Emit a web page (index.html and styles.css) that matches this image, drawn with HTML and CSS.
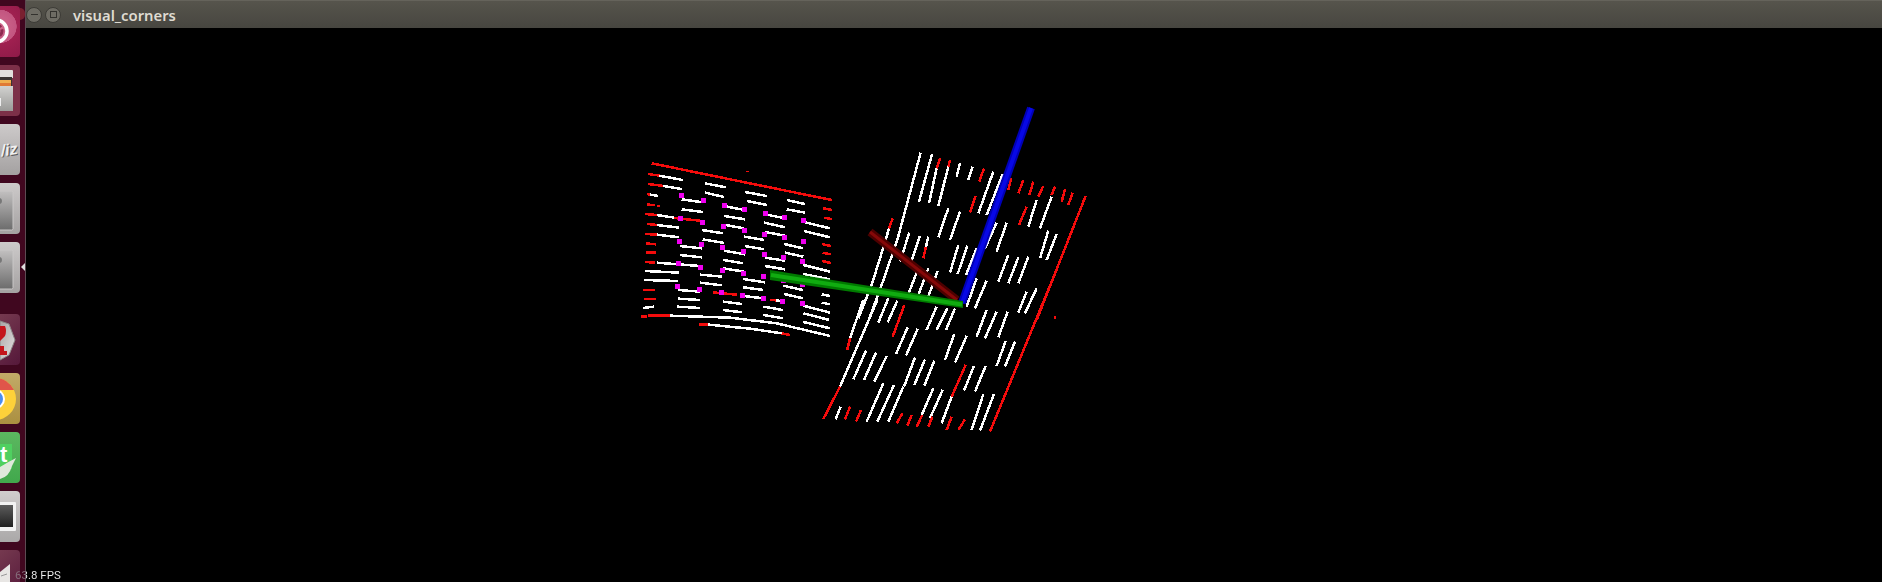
FILE: index.html
```html
<!DOCTYPE html>
<html lang="en">

<head>
    <title>visual_corners</title>
    <meta charset="utf-8">
    <link rel="stylesheet" href="styles.css">
</head>

<body>

    <nav class="launcher">
        <span class="close-peek"></span>

        <div class="tile tile-dash">
            <svg width="20" height="51">
                <circle cx="-4" cy="25" r="11" fill="none" stroke="#fff" stroke-width="3.5" />
                <circle cx="-4" cy="25" r="6" fill="none" stroke="#8e2a50" stroke-width="3" stroke-dasharray="5 2" />
            </svg>
        </div>

        <div class="tile tile-files">
            <svg width="20" height="51">
                <path d="M0 5H12Q13 5 13 6V13H0Z" fill="#e2e0dd" />
                <rect x="0" y="12" width="12" height="12" fill="#3a3532" />
                <rect x="0" y="15" width="11" height="3" fill="#f0b050" />
                <rect x="0" y="18" width="11" height="3" fill="#e07a35" />
                <path d="M0 21H13V46H0Z" fill="url(#cabinet)" />
                <rect x="0" y="33" width="1" height="8" fill="#eee" />
                <defs>
                    <linearGradient id="cabinet" x1="0" y1="0" x2="0" y2="1">
                        <stop offset="0" stop-color="#d2d2d0" />
                        <stop offset="1" stop-color="#9a9a98" />
                    </linearGradient>
                </defs>
            </svg>
        </div>

        <div class="tile tile-gray">
            <svg width="20" height="51">
                <text class="viz-shadow" x="1.5" y="32" transform="rotate(-8 10 25)">/iz</text>
                <text class="viz" x="0.5" y="31" transform="rotate(-8 10 25)">/iz</text>
            </svg>
        </div>

        <div class="tile tile-gray">
            <svg width="20" height="51">
                <rect x="-6" y="8" width="19" height="39" rx="1.5" fill="url(#unknown)" stroke="#c9c7c7" />
                <circle cx="-1" cy="18" r="3" fill="#777" />
                <defs>
                    <linearGradient id="unknown" x1="0" y1="0" x2="0" y2="1">
                        <stop offset="0" stop-color="#c2c0c0" />
                        <stop offset="1" stop-color="#6c6c6c" />
                    </linearGradient>
                </defs>
            </svg>
        </div>

        <div class="tile tile-gray tile-running">
            <svg width="20" height="51">
                <rect x="-6" y="8" width="19" height="39" rx="1.5" fill="url(#unknown)" stroke="#c9c7c7" />
                <circle cx="-1" cy="18" r="3" fill="#777" />
            </svg>
        </div>

        <div class="tile tile-maroon">
            <svg width="20" height="51">
                <path d="M0 7L9 10L15 26L9 41L0 46Z" fill="url(#hex)" stroke="#8b8686" />
                <path d="M0 12H5Q7 17 5 22L0 27ZM0 32H4V37H7V41H0Z" fill="#c4161c" />
                <defs>
                    <linearGradient id="hex" x1="0" y1="0" x2="1" y2="1">
                        <stop offset="0" stop-color="#a8a4a4" />
                        <stop offset="1" stop-color="#e4e2e2" />
                    </linearGradient>
                </defs>
            </svg>
        </div>

        <div class="tile tile-chrome">
            <svg width="20" height="51">
                <circle cx="-5" cy="26" r="21" fill="#fdd13a" />
                <path d="M-5 5A21 21 0 0 1 14 17H-5Z" fill="#e0554a" />
                <circle cx="-5" cy="26" r="10" fill="#fff" />
                <circle cx="-5" cy="26" r="8" fill="#4a8df0" />
            </svg>
        </div>

        <div class="tile tile-green">
            <svg width="20" height="51">
                <rect x="0" y="12" width="12" height="25" fill="#4fd060" />
                <text class="letter-t" x="0" y="30">t</text>
                <path d="M0 47Q9 45 12 34Q14 30 16 26Q8 30 0 35Z" fill="#dfe8dc" />
            </svg>
        </div>

        <div class="tile tile-light">
            <svg width="20" height="51">
                <rect x="-4" y="11" width="20" height="29" rx="1" fill="#f2f2f2" />
                <rect x="-4" y="14" width="17" height="22" fill="url(#screen)" />
                <defs>
                    <linearGradient id="screen" x1="0" y1="0" x2="0" y2="1">
                        <stop offset="0" stop-color="#5c5c5c" />
                        <stop offset="1" stop-color="#202020" />
                    </linearGradient>
                </defs>
            </svg>
        </div>

        <div class="tile tile-maroon">
            <svg width="20" height="51">
                <path d="M0 22L10 14V33H0Z" fill="#e8e6e4" />
                <path d="M1 26L7 24" stroke="#999" fill="none" />
            </svg>
        </div>
    </nav>

    <main class="window">
        <header class="titlebar">
            <span class="win-btn"><span class="minus"></span></span>
            <span class="win-btn"><span class="square"></span></span>
            <span class="win-title">visual_corners</span>
        </header>

        <!-- viewBox uses screen coordinates, the groups below use the 3x crop coordinates -->
        <svg class="view" viewBox="26 28 1856 554" preserveAspectRatio="xMinYMin slice">

            <g class="dots" transform="translate(630 150) scale(.3333)">
                <path class="red" d="M65 40L605 150M55 72L88 77M55 102L100 108M52 132L60 134M52 164L75 165M82 168L90 168M45 192L80 195M133 204L210 212M52 222L80 225M45 252L80 254M48 280L78 283M48 308L78 308M45 336L75 338M40 420L75 420M42 447L78 447M33 500L52 500M55 497L120 497M207 524L235 524M455 550L480 555M580 175L605 180M583 203L605 207M575 282L602 288M578 308L602 313M577 333L602 339M248 427L320 434M420 450L438 451M352 62L352 65M652 600L660 565" />
                <path class="white" d="M88 77L158 90M100 108L155 117M60 134L85 138M80 195L133 203M80 225L148 233M80 254L148 262M80 338L210 348M45 363L147 368M42 390L143 393M40 474L72 470M120 497L300 503L440 520L600 558M235 524L360 536L455 550M225 100L287 112M225 128L283 141M345 126L410 138M155 148L220 157M155 178L218 186M280 168L345 180M350 153L410 165M470 150L525 162M470 178L525 188M282 198L345 208M405 193L465 205M402 218L465 232M280 224L342 235M525 217L600 235M215 240L280 250M405 246L465 257M342 260L403 270M522 243L600 262M218 268L282 279M462 282L520 295M345 288L402 298M150 288L215 295M282 302L345 313M465 308L520 320M150 315L215 322M405 323L465 332M280 330L340 340M520 345L600 365M405 348L465 358M280 355L342 365M520 372L600 388M210 374L277 380M340 387L405 397M210 398L275 406M460 407L518 420M340 412L400 420M462 432L520 445M145 420L210 425M332 437L400 445M145 446L210 450M278 455L337 462M438 451L460 455M575 433L600 438M575 458L600 463M520 467L600 488M400 470L458 480M142 470L210 474M278 480L337 487M400 495L460 505M520 490L598 510M520 516L600 535" />
                <path class="magenta" d="M154 138h.01M220 151h.01M284 166h.01M344 178h.01M406 190h.01M463 202h.01M520 211h.01M151 205h.01M217 217h.01M280 230h.01M343 242h.01M403 253h.01M463 262h.01M520 274h.01M148 274h.01M214 283h.01M277 294h.01M340 305h.01M403 315h.01M460 324h.01M517 336h.01M145 340h.01M211 352h.01M277 361h.01M340 370h.01M400 379h.01M460 393h.01M517 403h.01M142 409h.01M208 418h.01M274 427h.01M337 436h.01M400 445h.01M457 454h.01M517 460h.01" />
            </g>

            <g class="edges" transform="translate(820 100) scale(.3333)">
                <path class="white" d="M302 158L232 420L185 555L150 650M207 385L197 420L155 555L115 655M336 163L297 305M350 205L327 310M385 200L355 318M420 190L410 230M458 200L445 240M520 215L475 340M548 222L500 345M650 300L625 380M695 290L660 385M385 325L355 412M420 335L390 420M530 368L495 445M560 368L530 455M710 402L680 480M685 392L660 475M268 398L240 485M300 408L270 495M325 410L318 440M415 435L390 518M442 437L413 522M470 445L438 525M565 465L535 545M595 472L565 550M625 470L595 550M353 513L325 590M325 505L295 585M295 505L262 590M650 565L615 640M620 575L595 638M470 535L440 620M500 542L465 625" />
                <path class="red" d="M360 175L350 205M390 180L385 200M492 205L478 245M573 235L565 270M610 240L595 280M640 245L628 285M670 258L655 290M705 260L695 285M735 268L725 305M758 278L745 315M797 288L650 660M467 288L450 338M620 320L597 375M218 355L207 385M318 440L310 475" />
            </g>

            <g class="edges" transform="translate(820 280) scale(.3333)">
                <path class="white" d="M500 90L470 170M530 95L495 175M563 95L535 172M350 80L320 150M382 85L350 150M405 85L378 150M263 142L228 222M293 147L258 227M130 60L90 175M172 60L60 320M205 55L175 128M232 62L203 127M138 212L100 298M168 218L132 300M200 228L163 305M285 232L252 320M343 242L313 317M315 238L283 315M403 162L375 240M440 168L405 248M557 183L530 258M585 185L555 260M462 258L432 332M497 258L465 335M190 310L140 425M222 315L172 425M250 320L205 425M340 325L305 405M368 330L330 415M395 350L365 430M490 342L455 450M522 342L480 452M62 380L47 418" />
                <path class="red" d="M253 75L218 170M90 175L82 207M60 320L10 417M437 255L395 350M90 380L75 418M123 390L108 425M247 400L230 430M275 405L262 437M307 405L290 440M337 410L325 440M395 410L380 450M435 418L415 450M697 0L510 455M703 113h4" />
            </g>

            <line class="axis axis-x" x1="870" y1="232" x2="957" y2="300" />
            <line class="axis axis-x-core" x1="870" y1="232" x2="957" y2="300" />
            <line class="axis axis-z" x1="1031" y1="108" x2="962" y2="303" />
            <line class="axis axis-z-core" x1="1031" y1="108" x2="962" y2="303" />
            <polygon class="axis-y" points="770,270 963,301 963,308 770,280" />
            <line class="axis axis-y-core" x1="771" y1="275" x2="962" y2="304.5" />
        </svg>
    </main>

    <div class="fps">63.8 FPS</div>

</body>

</html>
```

FILE: styles.css
```css
html,
body {
    margin: 0;
    height: 582px;
    overflow: hidden;
    background-color: #000;
}

body {
    display: flex;
}

/* launcher */

.launcher {
    position: relative;
    width: 26px;
    height: 582px;
    flex: none;
    overflow: hidden;
    box-sizing: border-box;
    padding-top: 6px;
    background-color: #40071f;
    border-right: 1px solid #5c4a52;
}

.close-peek {
    position: absolute;
    left: 20px;
    top: 8px;
    width: 5px;
    height: 12px;
    border-radius: 0 6px 6px 0;
    background-color: #7a2030;
}

.tile {
    width: 20px;
    height: 51px;
    margin-bottom: 8px;
    border-radius: 0 4px 4px 0;
    overflow: hidden;
}

.tile svg {
    display: block;
}

.tile-dash {
    background: radial-gradient(circle at 0 40%, #d0688c 0, #c25580 45%, #a02050 46%, #8e1a48 100%);
}

.tile-files {
    background-color: #7c3048;
}

.tile-gray {
    background: linear-gradient(#cdcaca, #a4a1a1);
}

.tile-running {
    margin-bottom: 21px;
}

.tile-maroon {
    background: linear-gradient(135deg, #75394f, #55183a);
}

.tile-chrome {
    background: linear-gradient(#c2aa68, #ab9040);
}

.tile-green {
    background: linear-gradient(#5cb860, #41a84c);
}

.tile-light {
    background: linear-gradient(#d0cdcd, #aaa8a8);
}

.launcher::after {
    content: "";
    position: absolute;
    left: 21px;
    top: 262px;
    border-style: solid;
    border-width: 5px 5px 5px 0;
    border-color: transparent #ddd transparent transparent;
}

.viz,
.viz-shadow {
    font-family: "Liberation Sans", sans-serif;
    font-size: 16px;
    font-weight: bold;
    font-style: italic;
}

.viz {
    fill: #f0f0f0;
}

.viz-shadow {
    fill: #555;
}

.letter-t {
    font-family: "Liberation Sans", sans-serif;
    font-size: 22px;
    font-weight: bold;
    fill: #fff;
}

/* window */

.window {
    flex: 1;
    display: flex;
    flex-direction: column;
    min-width: 0;
}

.titlebar {
    height: 28px;
    flex: none;
    display: flex;
    align-items: center;
    box-sizing: border-box;
    background: linear-gradient(#56544c, #474640);
    border-top: 1px solid #65635b;
}

.win-btn {
    width: 16px;
    height: 16px;
    margin-right: 3px;
    border-radius: 50%;
    border: 1px solid #3c3b36;
    background-color: #6e6c64;
    box-sizing: border-box;
    display: flex;
    align-items: center;
    justify-content: center;
}

.minus {
    width: 7px;
    height: 1px;
    background-color: #33322e;
}

.square {
    width: 7px;
    height: 7px;
    box-sizing: border-box;
    border: 1px solid #33322e;
}

.win-title {
    margin-left: 9px;
    font-family: "Noto Sans", sans-serif;
    font-size: 14.8px;
    font-weight: 600;
    color: #dfdbd2;
}

.view {
    flex: 1;
    display: block;
    width: 1856px;
    height: 554px;
    background-color: #000;
}

.dots path,
.edges path {
    fill: none;
    stroke-width: 7.5;
    shape-rendering: crispEdges;
}

.red {
    stroke: #f40c0c;
}

.white {
    stroke: #fff;
}

.dots .magenta {
    stroke: #f000f0;
    stroke-width: 15;
    stroke-linecap: square;
}

.axis {
    fill: none;
}

.axis-x {
    stroke: #4e0000;
    stroke-width: 8;
}

.axis-x-core {
    stroke: #860808;
    stroke-width: 3;
}

.axis-z {
    stroke: #0000b8;
    stroke-width: 8;
}

.axis-z-core {
    stroke: #0808e6;
    stroke-width: 4;
}

.axis-y {
    fill: #007a00;
}

.axis-y-core {
    stroke: #10ac10;
    stroke-width: 4;
}

/* fps counter lies over launcher and window, the launcher part is dimmed */

.fps {
    position: absolute;
    left: 15px;
    top: 568px;
    font-family: "Roboto", sans-serif;
    font-size: 11.5px;
    line-height: 15px;
    color: transparent;
    background: linear-gradient(90deg, #86707c 11px, #f0f0f0 11px);
    -webkit-background-clip: text;
    background-clip: text;
}
```
